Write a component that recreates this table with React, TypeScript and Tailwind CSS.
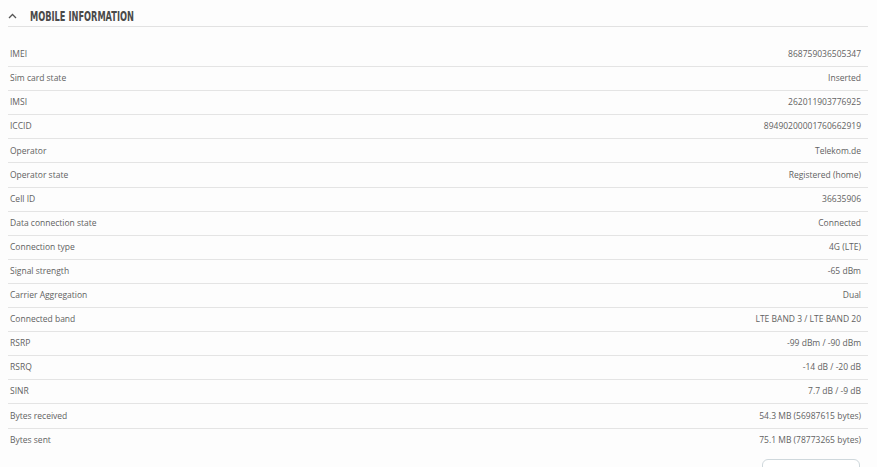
import React from 'react';

const rows: [string, string][] = [
  ['IMEI', '868759036505347'],
  ['Sim card state', 'Inserted'],
  ['IMSI', '262011903776925'],
  ['ICCID', '89490200001760662919'],
  ['Operator', 'Telekom.de'],
  ['Operator state', 'Registered (home)'],
  ['Cell ID', '36635906'],
  ['Data connection state', 'Connected'],
  ['Connection type', '4G (LTE)'],
  ['Signal strength', '-65 dBm'],
  ['Carrier Aggregation', 'Dual'],
  ['Connected band', 'LTE BAND 3 / LTE BAND 20'],
  ['RSRP', '-99 dBm / -90 dBm'],
  ['RSRQ', '-14 dB / -20 dB'],
  ['SINR', '7.7 dB / -9 dB'],
  ['Bytes received', '54.3 MB (56987615 bytes)'],
  ['Bytes sent', '75.1 MB (78773265 bytes)'],
];

const App = () => {
  return (
    <div className="h-[467px] bg-[#fdfdfd] pl-[8px] pr-[9px] pt-[8px] overflow-hidden">
      {/* Section header */}
      <div className="flex items-center h-[19px] border-b border-[#e2e2e2]">
        <svg width="9" height="6" viewBox="0 0 9 6" className="mr-[13px] mb-[2px]">
          <path d="M1 5 L4.5 1.5 L8 5" fill="none" stroke="#555" strokeWidth="1.3" />
        </svg>
        <span
          className="text-[14px] font-semibold text-[#4a4a4a] leading-none mb-[3px] origin-left scale-x-[0.59] whitespace-nowrap"
          style={{ fontFamily: '"DejaVu Sans", sans-serif' }}
        >
          MOBILE INFORMATION
        </span>
      </div>

      {/* Info rows */}
      <div className="mt-[16px]" style={{ fontFamily: '"Open Sans", sans-serif' }}>
        {rows.map(([label, value], i) => (
          <div
            key={label}
            className={
              'flex items-center justify-between h-[24.1px] pl-[2px] pr-[7px] text-[8.5px] text-[#626262] ' +
              (i < rows.length - 1 ? 'border-b border-[#e4e4e4]' : '')
            }
          >
            <span>{label}</span>
            <span>{value}</span>
          </div>
        ))}
      </div>

      <div className="flex justify-end pr-[8px] mt-[6px]">
        <div className="w-[98px] h-[20px] rounded-[6px] border border-[#cfd8dc] bg-white" />
      </div>
    </div>
  );
};

export default App;
